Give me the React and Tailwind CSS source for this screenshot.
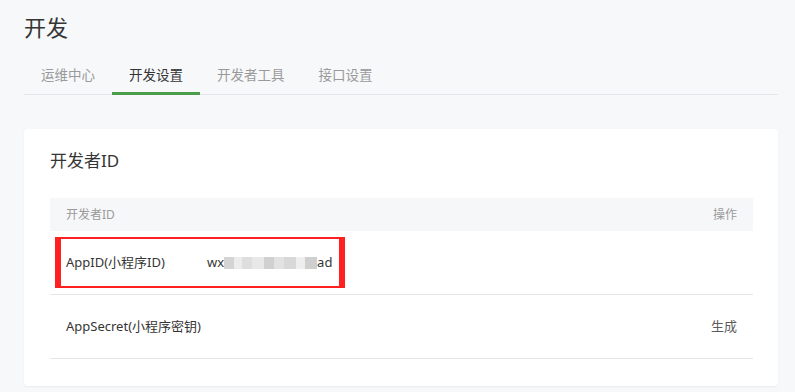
import React from 'react'

const tabs = ['运维中心', '开发设置', '开发者工具', '接口设置']

const blurBlocks = [
  { w: 'w-[10px]', c: 'bg-[#d4d4d4]' },
  { w: 'w-[8px]', c: 'bg-[#ececec]' },
  { w: 'w-[10px]', c: 'bg-[#dedede]' },
  { w: 'w-[12px]', c: 'bg-[#e8e8e8]' },
  { w: 'w-[10px]', c: 'bg-[#d0d0d0]' },
  { w: 'w-[10px]', c: 'bg-[#e2e2e2]' },
  { w: 'w-[12px]', c: 'bg-[#d8d8d8]' },
  { w: 'w-[9px]', c: 'bg-[#eeeeee]' },
  { w: 'w-[12px]', c: 'bg-[#cfcfcf]' },
]

const App = () => {
  return (
    <div className="min-h-screen w-[795px] h-[392px] overflow-hidden bg-[#f7f8fa] font-['Noto_Sans','Noto_Sans_CJK_SC',sans-serif] text-[#353535]">
      <div className="pl-[24px] pr-[17px] pt-[11px]">
        {/* Page title */}
        <h1 className="text-[22px] leading-[32px] font-normal text-[#353535]">开发</h1>

        {/* Tabs */}
        <div className="mt-[22px] flex border-b border-[#e4e6ea]">
          {tabs.map((tab, i) => (
            <div
              key={tab}
              className={`px-[17px] text-[13.5px] leading-[20px] ${
                i === 1
                  ? 'border-b-[3px] border-[#4a9d4a] text-[#353535] mb-[-1px] pb-[7px]'
                  : 'text-[#9a9a9a] pb-[9px]'
              }`}
            >
              {tab}
            </div>
          ))}
        </div>

        {/* Card */}
        <div className="mt-[34px] h-[257px] rounded-[4px] bg-white shadow-[0_1px_2px_rgba(0,0,0,0.06)] pl-[26px] pr-[25px] pt-[20px]">
          <h2 className="text-[17px] leading-[24px] font-normal text-[#353535]">开发者ID</h2>

          <div className="mt-[25px]">
            {/* Header */}
            <div className="flex h-[33px] items-center justify-between bg-[#f6f7f9] px-[16px] text-[12px] text-[#9a9a9a]">
              <span>开发者ID</span>
              <span>操作</span>
            </div>

            {/* AppID row */}
            <div className="flex h-[64px] items-center border-b border-[#e7e7eb]">
              <div className="ml-[5px] flex h-[51px] w-[290px] items-center border-x-[6px] border-y-2 border-[#ff2121] pl-[5px] text-[13px] text-[#353535]">
                <span className="w-[141px]">AppID(小程序ID)</span>
                <span className="flex items-center">
                  wx
                  <span className="flex h-[12px]">
                    {blurBlocks.map((b, i) => (
                      <span key={i} className={`h-full ${b.w} ${b.c}`} />
                    ))}
                  </span>
                  ad
                </span>
              </div>
            </div>

            {/* AppSecret row */}
            <div className="flex h-[64px] items-center justify-between border-b border-[#e7e7eb] px-[16px] text-[13px]">
              <span className="text-[#353535]">AppSecret(小程序密钥)</span>
              <span className="text-[#5b5b5b]">生成</span>
            </div>
          </div>
        </div>
      </div>
    </div>
  )
}

export default App
